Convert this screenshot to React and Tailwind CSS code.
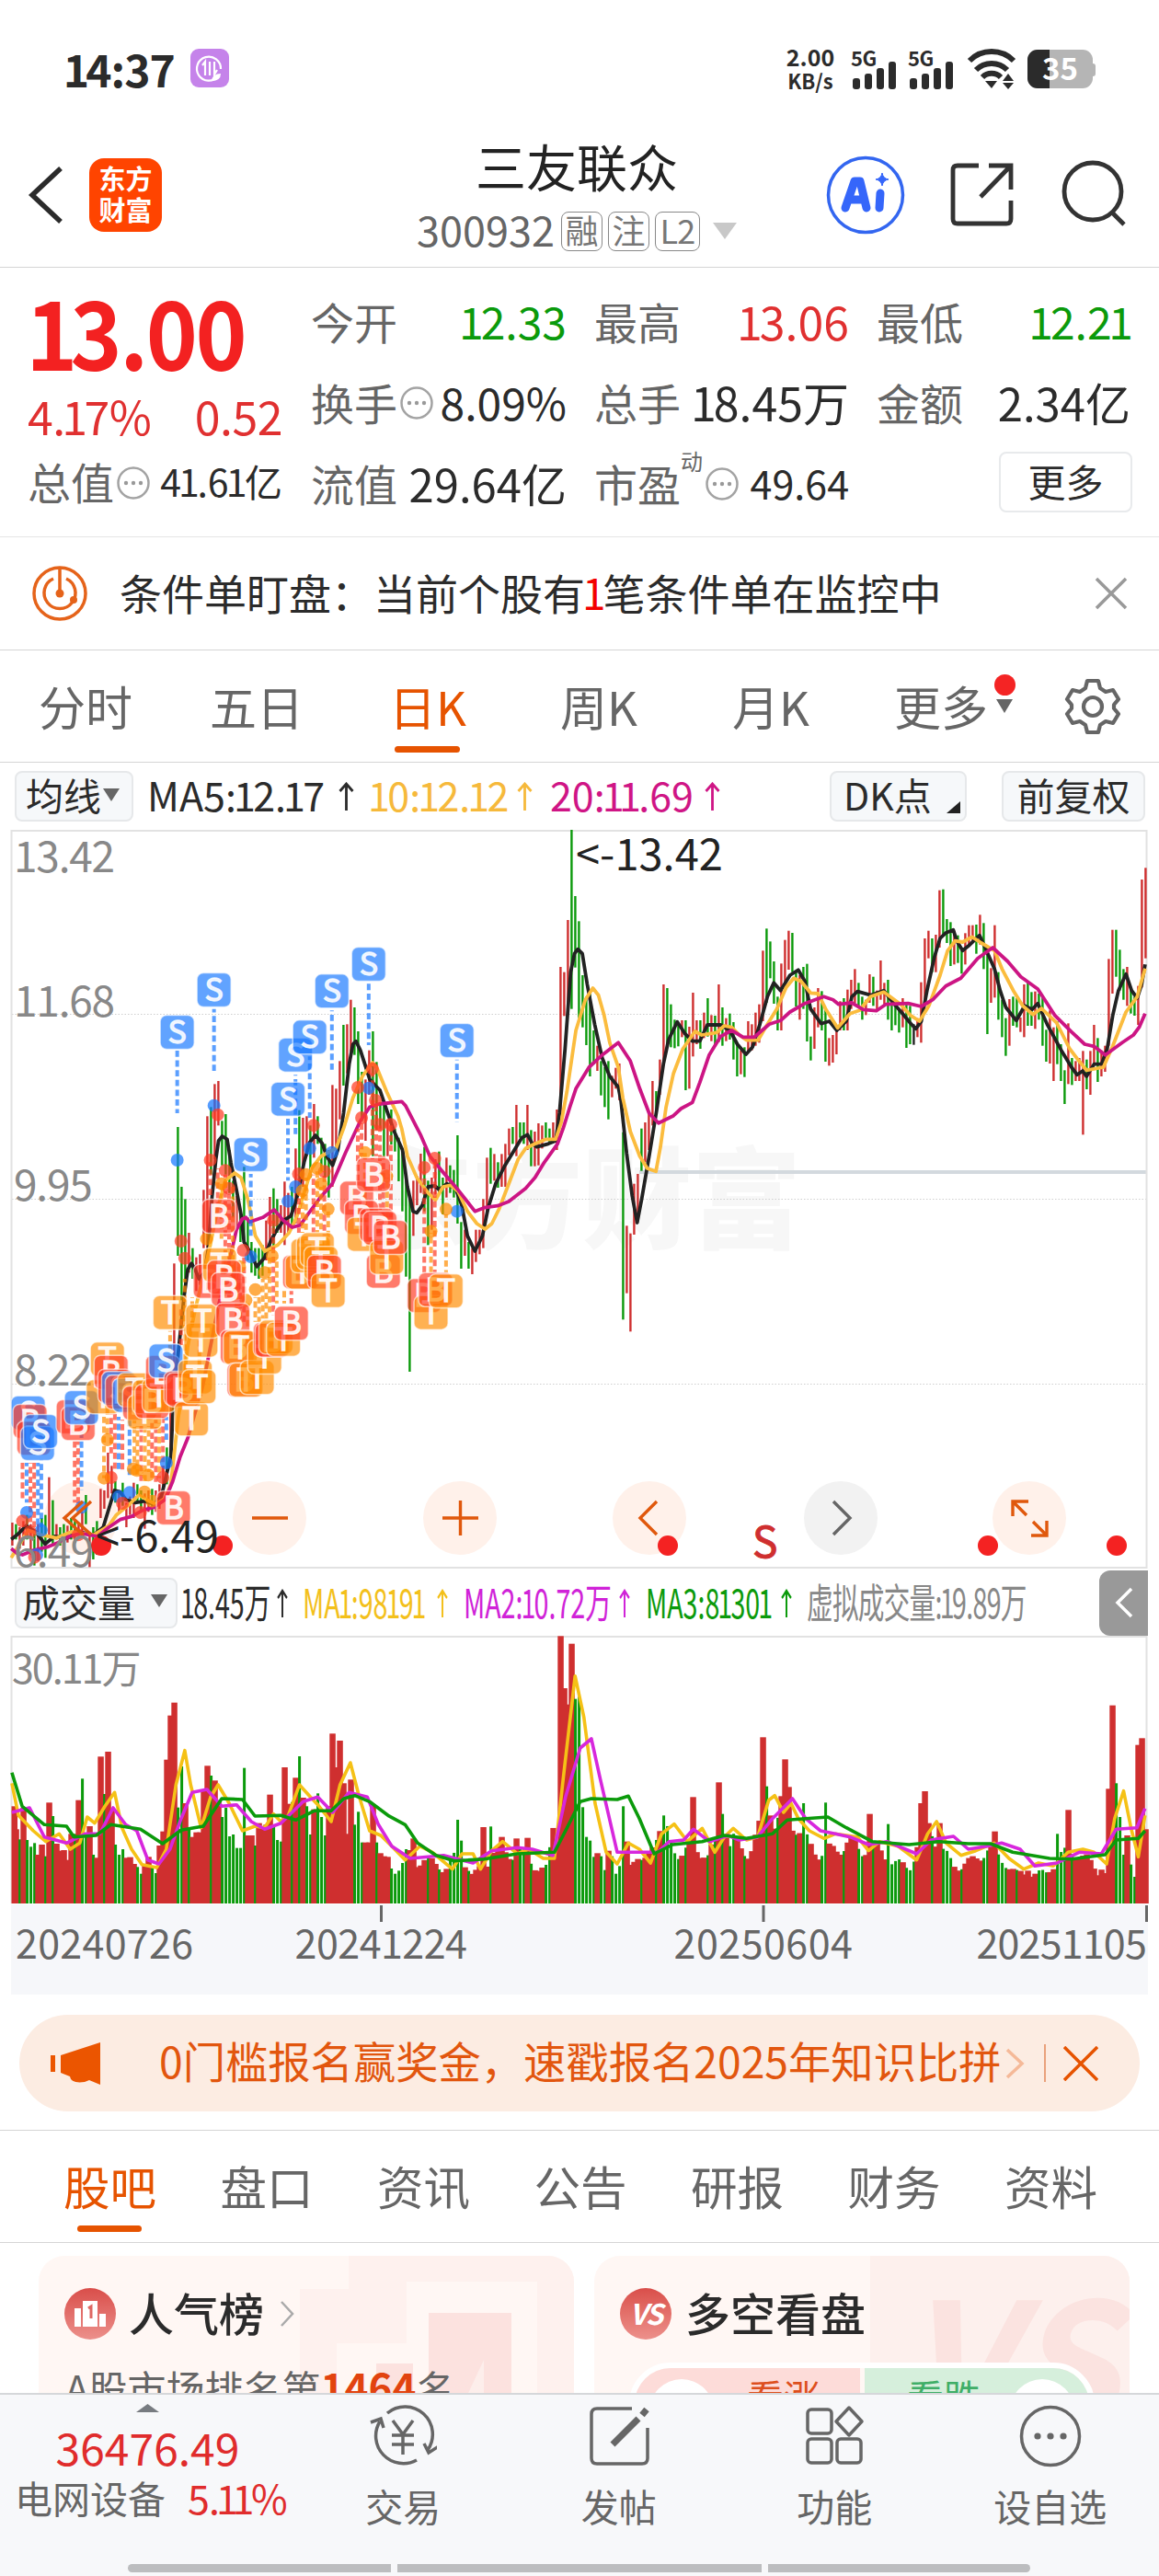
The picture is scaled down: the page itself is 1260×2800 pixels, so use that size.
import React from "react";

const RED = "#cf2f2f";
const GREEN = "#0b9a0b";
const FILL = { S: "#1677ff", B: "#ff3b24", T: "#ff8c00" };

// the chart data is kept on a finer grid than the screen
const px = (u) => u / 2.45;
const py = (v) => 890 + v / 3;
const vx = (u) => u / 1.2444;
const vy = (v) => 1700 + v / 3;

// one candle per day: colour, high, low
const CANDLES = `r2295-2370 g2300-2350 r2310-2380 r2290-2370 g2270-2350 r2300-2400 g2330-2435 r2300-2420 g2280-2390 g2270-2410
r2147-2340 g2222-2370 r2300-2350 g2310-2370 g2300-2430 r2305-2360 g2280-2350 g2290-2360 r2300-2340 r2260-2330
g2205-2300 r2340-2440 g2310-2415 g2290-2400 r2185-2280 r2190-2250 r2067-2215 r2110-2200 g2160-2230 r2190-2260
g2165-2240 r2230-2310 r2210-2270 r2165-2280 g2170-2230 g2190-2260 r2200-2315 r2190-2260 g2185-2270 r2190-2260
r2170-2250 r2110-2200 g2050-2170 r1800-2100 r1450-1800 g1005-1425 g1200-1570 g1240-1530 r1350-1480 g1400-1500
r1430-1540 r1420-1520 r1210-1400 r970-1400 g940-1160 r865-1110 r855-1000 g985-1130 g963-1160 g1080-1220
g1180-1300 r1230-1340 g1280-1380 g1135-1370 g1300-1440 g1380-1480 g1400-1490 g1400-1500 g1390-1490 r1310-1440
r1233-1410 g1205-1400 g1240-1350 r1260-1350 r1183-1390 r1220-1350 g1200-1330 r1075-1320 g950-1200 r975-1200
r970-1100 g1000-1170 r930-1105 g970-1060 g1040-1150 g1060-1170 g1080-1235 r868-1200 r880-1080 r790-980
g672-870 r670-830 r590-760 g615-770 g693-930 g825-985 r850-1050 r755-900 g693-1100 g793-1015
g930-1010 g930-1100 r980-1100 g948-1062 g1010-1085 g1040-1182 g1090-1280 g1180-1493 g1240-1803 r1180-1360
r1165-1260 r1092-1220 g1070-1280 g1180-1390 r1170-1340 r1110-1225 g1085-1220 g1170-1290 r1105-1235 g1130-1220
g1145-1235 g1032-1320 g1315-1467 r1340-1425 g1380-1467 r1400-1485 r1340-1445 r1340-1420 r1240-1400 r1105-1290
g1073-1190 r1093-1180 g1120-1203 r1093-1200 r1060-1200 r1010-1097 g1005-1060 r933-1100 g990-1040 g990-1060
r933-1080 g1015-1133 r1020-1133 r993-1130 r1000-1075 g990-1050 g1010-1060 r990-1050 r948-1080 r483-960
r500-643 r330-605 g36-620 g252-485 g334-650 g510-680 g580-738 g560-840 g690-800 r740-822
g790-902 g810-940 g790-980 r838-908 r812-880 r798-918 g1022-1633 r1327-1547 r1352-1672 r1190-1356
r1158-1300 g1010-1148 r990-1120 r960-1080 r855-1000 g888-960 r785-900 r540-800 g552-740 g605-745
g655-748 g665-742 r657-712 g657-885 r678-880 r567-775 r657-735 g657-750 r632-715 g585-710
r640-725 g642-735 r540-728 g615-740 r650-725 g635-720 g663-785 g735-840 r755-833 g745-842
r660-760 r670-755 r632-740 r605-730 r430-660 g358-600 g400-520 g465-603 g580-690 r472-690
r395-550 r365-492 g372-500 g500-612 r510-655 g483-620 g473-726 g710-788 r615-750 r552-680
g562-690 g620-792 r715-805 r705-795 r680-768 r595-690 g585-690 r557-690 r525-620 r490-600
g535-610 g580-655 r590-640 r507-600 g515-610 r560-625 r462-590 r535-605 g525-655 g590-690
g610-673 g620-697 r585-680 g600-747 g610-735 k670-737 r650-712 r533-730 r390-600 r365-455
g390-500 r378-500 r233-420 g230-380 g327-405 g337-480 r365-475 g380-470 g420-505 r373-475
r347-415 r347-400 g345-440 r313-410 g340-490 g420-702 r487-600 r347-583 g500-655 g590-712
g650-773 r588-740 g580-675 g585-680 r648-695 r540-712 g530-675 g565-675 r563-685 g570-655
g580-740 g688-792 r625-798 r680-855 g660-800 g735-855 g820-930 r667-865 g780-868 r790-855
r780-855 r757-1030 g785-882 r757-900 r672-800 g715-858 r755-840 r740-825 r457-740 r362-570
g362-515 g427-560 g490-590 r483-610 g555-635 g580-642 r545-672 r198-550 r160-455`
    .split(/\s+/)
    .map((s) => {
        const [high, low] = s.slice(1).split("-").map(Number);
        return { color: s[0], high, low };
    });

const MA5 =
    "30,2350 50,2330 70,2305 95,2325 120,2365 145,2340 180,2345 210,2325 250,2335 275,2310 295,2230 305,2190 320,2195 335,2220 360,2230 385,2225 410,2235 430,2210 445,2130 455,2080 460,1950 470,1800 480,1680 490,1560 500,1470 510,1450 520,1470 530,1500 545,1480 555,1400 565,1230 575,1110 582,1050 592,1035 605,1045 615,1120 630,1210 642,1290 650,1380 665,1410 684,1460 705,1430 720,1380 735,1345 755,1310 775,1295 790,1240 810,1120 825,1055 840,1032 858,1058 870,1100 886,1130 900,1080 915,960 930,800 940,735 948,725 960,755 985,850 1000,870 1012,885 1030,950 1050,1020 1072,1080 1085,1200 1100,1280 1110,1285 1125,1260 1140,1200 1158,1197 1170,1210 1190,1190 1205,1200 1215,1210 1230,1260 1245,1360 1265,1410 1285,1360 1300,1270 1320,1190 1345,1130 1370,1080 1390,1040 1405,1030 1418,1060 1430,1070 1460,1060 1480,1050 1490,960 1505,750 1520,500 1530,440 1539,425 1551,440 1564,540 1584,670 1604,780 1624,840 1647,875 1654,920 1669,1090 1684,1230 1697,1317 1709,1240 1729,1100 1749,950 1767,800 1781,720 1804,662 1824,700 1844,725 1864,725 1884,672 1919,672 1944,690 1964,735 1987,768 2004,745 2024,670 2044,580 2061,535 2079,560 2104,510 2126,493 2144,530 2159,620 2187,668 2209,660 2229,690 2254,660 2269,580 2284,563 2319,575 2354,560 2379,600 2404,635 2424,665 2439,685 2454,660 2469,560 2489,450 2504,390 2519,372 2539,362 2549,400 2564,430 2579,415 2609,380 2624,420 2649,490 2664,560 2679,615 2707,658 2729,610 2749,622 2764,602 2789,670 2829,760 2854,810 2869,835 2884,822 2894,840 2914,800 2934,800 2949,750 2964,640 2979,560 2999,506 3014,560 3029,585 3041,540 3050,475";
const MA10 =
    "30,2410 50,2370 75,2320 110,2335 150,2345 190,2325 250,2335 290,2305 310,2270 345,2235 370,2205 390,2220 415,2235 440,2215 455,2170 465,2060 475,1950 485,1880 500,1720 520,1600 540,1500 560,1390 580,1270 600,1180 625,1155 642,1170 660,1240 680,1360 705,1410 740,1390 770,1350 790,1300 810,1220 830,1140 855,1100 895,1075 915,1010 940,910 965,840 992,795 1005,815 1030,890 1060,970 1070,1010 1085,1100 1110,1170 1140,1220 1160,1243 1180,1200 1200,1195 1220,1215 1245,1280 1270,1320 1292,1338 1310,1320 1330,1270 1355,1190 1380,1110 1400,1075 1425,1060 1455,1045 1480,1045 1495,990 1510,890 1534,690 1559,590 1579,552 1594,575 1609,640 1624,730 1647,810 1659,910 1679,1020 1704,1100 1724,1140 1747,1150 1759,1070 1774,940 1794,830 1819,750 1851,693 1869,705 1909,697 1929,675 1949,680 1969,705 1989,722 2019,722 2039,680 2069,620 2094,550 2114,520 2134,530 2159,568 2179,570 2199,620 2231,682 2264,635 2289,625 2319,580 2354,565 2399,605 2424,640 2449,660 2474,610 2504,510 2524,430 2544,398 2564,402 2589,385 2614,405 2649,430 2669,490 2699,560 2724,610 2751,638 2774,618 2814,665 2849,750 2874,790 2894,820 2939,810 2964,740 2999,630 3029,580 3050,488";
const MA20 =
    "30,2380 45,2395 60,2400 90,2385 125,2375 155,2360 185,2340 215,2330 260,2340 290,2310 320,2285 350,2275 380,2255 410,2245 440,2220 460,2160 480,2080 500,2020 540,1850 580,1600 600,1490 615,1420 630,1340 645,1305 655,1300 665,1315 700,1300 730,1275 755,1310 778,1332 800,1325 820,1290 850,1240 885,1190 920,1090 960,985 985,940 1010,930 1070,922 1080,935 1120,1030 1145,1100 1175,1145 1220,1210 1265,1280 1290,1268 1325,1262 1355,1248 1400,1205 1425,1170 1450,1120 1485,1060 1500,1010 1519,935 1534,880 1569,810 1604,770 1647,730 1679,790 1704,880 1729,960 1754,992 1794,968 1814,945 1844,925 1864,860 1889,770 1919,710 1949,690 1979,712 2009,712 2049,670 2079,658 2104,630 2144,602 2194,580 2219,590 2234,605 2269,600 2299,622 2334,626 2359,605 2419,602 2454,612 2484,590 2519,545 2559,520 2604,455 2644,420 2684,465 2719,515 2764,555 2809,640 2854,695 2889,735 2914,742 2944,770 2989,730 3019,705 3034,680 3050,635";

// dashed connectors between a day's dot and its badge
const STEMS = [
    ["S", 472, 756, 960], ["S", 570, 620, 825], ["S", 884, 625, 828], ["S", 982, 538, 738], ["S", 825, 775, 975],
    ["S", 787, 835, 1035], ["S", 767, 978, 1180], ["S", 668, 1158, 1360], ["S", 1217, 785, 990],
    ["B", 60, 2100, 2220], ["S", 71, 2100, 2230], ["B", 81, 2100, 2300], ["B", 91, 2100, 2310], ["S", 101, 2100, 2310], ["S", 110, 2090, 2310],
    ["B", 199, 2030, 2230], ["B", 208, 2030, 2240], ["S", 217, 1985, 2190],
    ["T", 277, 1950, 2150], ["T", 286, 1900, 2010], ["B", 296, 1940, 2080], ["B", 306, 1940, 2120], ["S", 316, 1950, 2120],
    ["B", 326, 1960, 2130], ["S", 345, 1960, 2150], ["T", 358, 1960, 2120], ["T", 366, 1980, 2140], ["B", 376, 1980, 2165],
    ["T", 386, 1990, 2160], ["T", 396, 1980, 2130], ["B", 405, 1970, 2160], ["B", 415, 1960, 2165], ["T", 424, 1970, 2150],
    ["B", 434, 1950, 2140], ["S", 443, 1950, 2030], ["T", 453, 1670, 1850], ["B", 482, 1600, 1720], ["T", 492, 1500, 1800],
    ["T", 512, 1560, 1650], ["T", 531, 1700, 1800], ["B", 560, 1120, 1240], ["B", 580, 1140, 1260], ["T", 590, 1190, 1380],
    ["B", 600, 1160, 1480], ["B", 610, 1210, 1560], ["T", 620, 1200, 1580], ["T", 630, 1460, 1640], ["B", 640, 1500, 1640],
    ["B", 650, 1430, 1640], ["T", 660, 1580, 1740], ["T", 680, 1560, 1640], ["T", 690, 1560, 1640], ["T", 700, 1500, 1630],
    ["T", 709, 1500, 1630], ["T", 718, 1430, 1620], ["B", 728, 1310, 1620], ["T", 737, 1430, 1580], ["T", 757, 1540, 1580],
    ["B", 776, 1540, 1580], ["B", 796, 1160, 1350], ["T", 806, 1220, 1350], ["T", 815, 1170, 1350], ["B", 835, 1160, 1350],
    ["T", 845, 1150, 1350], ["T", 855, 1200, 1350], ["B", 864, 1150, 1410], ["T", 874, 1280, 1440], ["B", 953, 1010, 1180],
    ["B", 963, 980, 1100], ["T", 972, 1090, 1260], ["B", 992, 830, 1110], ["B", 1002, 920, 1100], ["B", 1012, 1000, 1280],
    ["B", 1021, 1100, 1300], ["T", 1031, 1170, 1300], ["B", 1041, 1000, 1300], ["B", 1130, 1150, 1480], ["T", 1148, 1350, 1480],
    ["B", 1158, 1120, 1480], ["T", 1188, 1290, 1480],
];
const DOTS = {
    S: "472,1113 570,935 982,878 884,1088 825,1075 787,1200 767,1247 668,1428 1217,1280 443,2100 345,2197 71,2262 110,2320 98,2400 217,2245 316,2210",
    B: "580,965 560,1113 600,1147 610,1205 835,1000 864,1150 953,876 992,815 1000,918 963,975 1012,997 1041,997 1130,1137 1158,1107 482,1377 492,1433 648,1407 728,1310 795,1158 296,2148 434,2148 326,2232 374,2262 60,2290 80,2325 92,2408 208,2335",
    T: "590,1190 815,1160 845,1140 855,1190 805,1213 874,1273 972,1088 1030,1165 1188,1273 1148,1345 277,2150 286,2025 355,2120 365,2125 385,2195 395,2140 405,2225 550,1370 638,1460 655,1570 680,1535 705,1480 725,1425",
};
const BADGES =
    "S472,696 S570,558 S668,1095 S767,914 S787,770 S825,712 S884,562 S982,474 S1217,723 S75,1937 B80,1965 B90,2020 S100,2037 S108,1998 B195,1950 B208,1972 S217,1920 T275,1885 T286,1762 B296,1805 B306,1850 S316,1858 B326,1870 S345,1880 T358,1862 B372,1905 T385,1935 T398,1885 B405,1900 T424,1880 B433,1805 S442,1768 B462,2247 T453,1610 B482,1857 B488,1862 T510,1957 T520,1820 T530,1852 T535,1700 B560,1508 T585,1455 T540,1638 B583,1296 B597,1495 B608,1535 B620,1635 B632,1722 T640,1725 B650,1830 T655,1830 T685,1822 T705,1755 B720,1698 B725,1700 T735,1690 T755,1697 B776,1645 B798,1478 T805,1478 T820,1425 T835,1415 T845,1405 T855,1450 B864,1478 T874,1538 B950,1237 B963,1300 T970,1355 B995,1160 B1003,1325 B1012,1335 B1021,1475 T1030,1430 B1040,1365 B1130,1555 T1148,1610 B1160,1535 T1188,1540";

const VMA1 =
    "16,715 25,820 45,870 62,905 80,880 95,930 108,910 118,825 128,845 142,790 155,745 165,860 178,930 192,980 212,990 225,930 238,720 250,608 258,720 272,860 285,760 295,720 310,780 328,870 345,855 358,860 370,815 380,840 390,820 405,720 420,760 430,785 448,840 460,720 474,648 485,750 500,870 515,885 530,920 548,965 568,920 585,940 612,995 625,945 640,945 650,995 665,935 680,905 700,945 715,930 735,960 750,960 762,700 778,365 790,500 805,780 820,940 835,978 850,910 865,930 880,975 895,880 912,848 930,905 950,862 967,940 980,890 992,862 1010,900 1025,890 1040,770 1048,755 1060,810 1070,780 1080,830 1095,870 1115,895 1130,880 1160,890 1175,935 1190,905 1215,920 1240,965 1255,880 1267,840 1280,910 1300,950 1320,935 1345,910 1365,960 1385,995 1405,975 1425,985 1445,940 1465,930 1480,940 1497,978 1508,830 1520,740 1530,860 1540,955 1549,820";
const VMA2 =
    "16,810 40,795 60,890 90,910 115,880 135,880 153,795 170,850 185,870 200,965 215,978 230,930 245,830 260,745 280,735 300,790 320,785 340,840 358,865 380,845 410,775 430,760 450,810 472,745 497,760 512,850 530,920 555,960 600,950 640,975 665,935 700,925 720,930 748,950 765,760 785,600 800,570 812,700 835,940 890,940 905,905 925,900 938,865 960,905 985,885 1000,900 1025,890 1045,830 1072,765 1090,830 1110,870 1130,880 1150,890 1175,915 1200,905 1240,945 1260,900 1290,888 1310,930 1335,920 1355,910 1380,930 1400,985 1430,975 1460,940 1490,945 1510,865 1538,860 1549,797";
const VMA3 =
    "16,680 30,790 60,850 90,855 100,890 130,885 150,850 190,865 220,912 245,868 275,855 300,765 328,768 345,822 380,820 400,835 425,805 448,805 465,765 480,755 500,775 525,820 548,850 565,910 590,950 615,968 655,962 700,945 750,940 765,870 785,775 800,765 835,768 850,757 865,830 885,945 910,915 950,905 980,885 1010,895 1045,880 1065,835 1120,825 1145,860 1180,905 1230,915 1270,905 1310,912 1340,912 1370,940 1420,960 1450,962 1495,948 1510,900 1540,895 1549,870";
// days whose volume is known
const VOLUMES =
    "r18,790 r23,865 g28,898 r33,795 g38,900 g43,922 g48,910 r53,948 r58,915 g63,953 r66,778 g71,822 r78,912 r83,935 r88,933 r93,965 r98,880 g103,880 r110,770 g115,700 r121,855 g126,948 r131,958 r136,628 g141,750 r146,612 r151,800 g156,915 g161,948 g166,930 r171,958 r176,956 r181,978 g186,988 g191,1010 r196,980 r201,955 g206,988 g211,1008 r216,918 r221,875 r225,872 r230,638 r235,494 r240,452 g245,660 r250,780 g255,865 r260,890 r265,875 r270,875 r275,740 r280,658 g285,690 r290,706 r295,772 g300,825 g305,795 g310,888 g315,882 g320,926 g325,926 g330,665 r335,885 r340,885 g345,918 r350,845 r355,855 r361,850 r366,752 g371,855 g376,900 g381,905 r385,663 r390,782 r400,697 g405,627 r410,762 g415,790 g420,882 r425,800 g430,748 g435,825 g440,885 g445,932 r449,790 r454,553 r459,663 r464,576 r469,715 r474,703 g479,850 g484,808 g489,908 r494,908 r499,908 r505,785 g510,908 r515,943 r520,953 g525,953 r528,955 g531,993 g536,1010 g541,1000 g546,975 g551,930 r556,933 r559,895 g619,834 g624,902 r658,858 g664,856 r680,890 r699,895 r714,893 r753,868 r758,235 r763,405 r768,458 r773,260 g778,440 g783,433 g788,793 g793,890 g798,902 g803,955 r808,943 g813,953 g818,998 r823,935 g828,953 g833,1010 g838,985 g843,790 r848,905 r898,750 g902,820 r937,760 r972,712 g977,815 g990,920 r1032,565 g1037,725 r1042,820 r1057,757 r1062,637 r1067,727 g1091,780 g1117,778 r1176,815 g1201,848 r1246,780 r1251,741 r1272,845 r1346,872 r1390,1000 g1430,880 r1445,802 r1488,1015 r1495,1008 r1500,733 r1505,461 g1510,715 g1515,825 g1520,948 r1525,885 g1530,980 g1535,1020 r1544,590 r1549,568";

const parse = (s) => s.split(" ").map((p) => p.split(",").map(Number));
const line = (s, fx, fy) =>
    parse(s)
        .map(([x, y]) => `${fx(x).toFixed(1)},${fy(y).toFixed(1)}`)
        .join(" ");

// height of a line at x
const at = (points, x) => {
    const i = points.findIndex((p) => p[0] >= x);
    if (i <= 0) return points[i === 0 ? 0 : points.length - 1][1];
    const [a, b] = [points[i - 1], points[i]];
    return a[1] + ((b[1] - a[1]) * (x - a[0])) / (b[0] - a[0]);
};

const volumes = (() => {
    const ma = parse(VMA1);
    const bars = CANDLES.map((c, i) => {
        const x = 18.5 + i * 4.978;
        const noise = Math.sin(i * 12.9) * 0.5 + Math.sin(i * 5.3) * 0.5;
        const h = (1107 - Math.max(at(ma, x + 8), 760)) * (0.86 + noise * 0.22);
        const color = c.color === "r" || i % 5 === 2 ? "r" : "g";
        return { color, top: 1107 - h };
    });
    VOLUMES.split(" ").forEach((p) => {
        const [x, top] = p.slice(1).split(",").map(Number);
        const i = Math.min(bars.length - 1, Math.round((x - 18.5) / 4.978));
        bars[i] = { color: p[0], top };
    });
    return bars;
})();

// digits, with the "1" set tighter than the others
const Num = ({ children, className = "" }) => (
    <span className={`whitespace-nowrap ${className}`}>
        {String(children)
            .split(/(1)/)
            .map((s, i) =>
                s === "1" ? (
                    <span key={i} className="-ml-[0.07em] -mr-[0.06em]">
                        1
                    </span>
                ) : (
                    s
                )
            )}
    </span>
);

const Info = ({ className = "" }) => (
    <svg className={`shrink-0 ${className}`} width="38" height="38" viewBox="0 0 38 38">
        <circle cx="19" cy="19" r="16.5" fill="none" stroke="#a3a3a3" strokeWidth="2.5" />
        <g fill="#999">
            <circle cx="11" cy="19" r="2.2" />
            <circle cx="19" cy="19" r="2.2" />
            <circle cx="27" cy="19" r="2.2" />
        </g>
    </svg>
);

const Down = ({ w = 16, h = 14, color = "#666", className = "" }) => (
    <svg className={`shrink-0 ${className}`} width={w} height={h} viewBox="0 0 10 10" preserveAspectRatio="none">
        <path d="M0 0h10L5 10z" fill={color} />
    </svg>
);

const Signal = () => (
    <div className="flex h-[44px] w-[50px] flex-col justify-between">
        <span className="-mt-[6px] h-[30px] text-[22px] font-bold leading-[30px] tracking-tight">5G</span>
        <svg className="-mt-4" width="50" height="30" viewBox="0 0 50 30">
            <g fill="#2b2b2b">
                <rect x="2" y="18" width="8" height="12" rx="3" />
                <rect x="15" y="13" width="8" height="17" rx="3" />
                <rect x="28" y="7" width="8" height="23" rx="3" />
                <rect x="41" y="0" width="8" height="30" rx="3" />
            </g>
        </svg>
    </div>
);

function StatusBar() {
    return (
        <div className="flex h-[140px] items-start pt-[52px] pl-[72px] text-[#2b2b2b]">
            <Num className="w-[135px] text-[48px] font-bold leading-[44px] tracking-[-0.02em]">14:37</Num>
            <svg width="42" height="44" viewBox="0 0 42 44">
                <rect y="1" width="42" height="42" rx="9" fill="#c583ea" />
                <g fill="none" stroke="#fff" strokeWidth="2.2">
                    <path d="M30 31a13 13 0 1 1 3-8" />
                    <path d="M16 30V15l-3 4M21 15v15M26 15v14l3-5" />
                </g>
                <path d="M23 36q1-8 10-8q0 8-10 8" fill="#fff" />
            </svg>
            <div className="ml-[604px] flex w-[56px] flex-col items-center text-[25px] font-bold leading-[26px]">
                <span className="-mt-1">2.00</span>
                <span className="text-[22px]">KB/s</span>
            </div>
            <div className="ml-4 flex gap-[12px] pt-[1px]">
                <Signal />
                <Signal />
            </div>
            <svg className="ml-[14px] mt-[1px]" width="54" height="44" viewBox="0 0 54 44">
                <g fill="none" stroke="#2b2b2b" strokeWidth="6">
                    <path d="M3 13a34 34 0 0 1 48 0" />
                    <path d="M10 23a24 24 0 0 1 34 0" />
                    <path d="M17 31a14 14 0 0 1 20 0" />
                </g>
                <path d="M20 35h13l-6 8zM39 35l6-8 6 8zM39 37h12l-6 7z" fill="#2b2b2b" />
            </svg>
            <div className="relative ml-[12px] mt-[2px] flex h-[42px] w-[71px] items-center justify-center overflow-hidden rounded-[11px] bg-[#b5b5b5]">
                <div className="absolute inset-y-0 left-0 w-[24px] bg-[#2b2b2b]" />
                <span className="relative -mt-1 text-[33px] font-bold leading-none text-white">35</span>
            </div>
            <div className="mt-[17px] h-[14px] w-[3px] rounded-r bg-[#b5b5b5]" />
        </div>
    );
}

const Tag = ({ children, className = "w-[45px]" }) => (
    <span
        className={`flex h-[43px] items-center justify-center rounded-[8px] border border-[#888] pb-[5px] text-[36px] leading-none text-[#777] ${className}`}
    >
        {children}
    </span>
);

function Header() {
    return (
        <div className="flex h-[151px] items-start border-b border-[#d5d5d5]">
            <svg className="ml-[30px] mt-[40px]" width="40" height="64" viewBox="0 0 40 64">
                <path d="M36 3L5 32l31 29" fill="none" stroke="#2b2b2b" strokeWidth="5.5" />
            </svg>
            <div className="ml-[27px] mt-[32px] flex h-[80px] w-[79px] flex-col items-center justify-center rounded-[16px] bg-[#ff4400] pb-1 text-[29px] font-bold leading-[34px] text-white">
                <span>东方</span>
                <span>财富</span>
            </div>
            <div className="ml-[271px] flex w-[360px] flex-col items-center">
                <span className="mt-[12px] h-[60px] text-[55px] leading-[54px] text-[#222]">三友联众</span>
                <div className="mt-[17px] flex h-[44px] items-center gap-[6px]">
                    <span className="mr-[1px] pb-[5px] text-[45px] leading-none text-[#666]">300932</span>
                    <Tag>融</Tag>
                    <Tag>注</Tag>
                    <Tag className="w-[49px] tracking-tight">L2</Tag>
                    <Down className="ml-[8px]" w={26} h={18} color="#c8c8c8" />
                </div>
            </div>
            <svg className="ml-[91px] mt-[28px]" width="86" height="88" viewBox="0 0 86 88">
                <circle cx="43" cy="44" r="40.5" fill="none" stroke="#3366f0" strokeWidth="3.5" />
                <path
                    d="M21 58L31 29h6l7 29M25 49h16"
                    fill="none"
                    stroke="#3566fa"
                    strokeWidth="9"
                    strokeLinejoin="round"
                    strokeLinecap="round"
                />
                <path d="M59 42L58 58" stroke="#3566fa" strokeWidth="9" strokeLinecap="round" />
                <path d="M61 20q1 6 7 7q-6 1-7 7q-1-6-7-7q6-1 7-7" fill="#3566fa" stroke="#3566fa" />
            </svg>
            <svg className="ml-[49px] mt-[36px]" width="70" height="70" viewBox="0 0 70 70">
                <g fill="none" stroke="#333" strokeWidth="4.8">
                    <path d="M31 4H8q-5 0-5 5v53q0 5 5 5h53q5 0 5-5V42" />
                    <path d="M42 4h24v26M65 5L33 38" />
                </g>
            </svg>
            <svg className="ml-[50px] mt-[34px]" width="74" height="74" viewBox="0 0 74 74">
                <g fill="none" stroke="#333" strokeWidth="4.8">
                    <circle cx="35" cy="34" r="31" />
                    <path d="M56 57l13 13" />
                </g>
            </svg>
        </div>
    );
}

const Cell = ({ label, info, sup, value, color = "text-[#2b2b2b]", size = "text-[48px]", className = "" }) => (
    <div className={`flex h-[88px] items-center ${className}`}>
        <span className="text-[47px] leading-none text-[#666]">{label}</span>
        {sup && <span className="mb-[46px] text-[24px] leading-none text-[#666]">{sup}</span>}
        {info && <Info className="mt-1 ml-[2px]" />}
        <Num className={`ml-auto leading-none ${size} ${color}`}>{value}</Num>
    </div>
);

function Quote() {
    return (
        <div className="flex h-[293px] items-start border-b border-[#e5e5e5] pt-[10px]">
            <div className="ml-[30px] w-[277px] shrink-0">
                <div className="h-[124px] pt-[8px]">
                    <Num className="ml-[5px] inline-block origin-left scale-x-[0.915] text-[104px] font-bold leading-[98px] tracking-[-0.025em] text-[#f32121]">
                        13.00
                    </Num>
                </div>
                <div className="flex h-[52px] items-center justify-between text-[50px] leading-none tracking-[-0.01em] text-[#e03030]">
                    <Num>4.17%</Num>
                    <Num>0.52</Num>
                </div>
                <Cell label="总值" info value="41.61亿" size="text-[41px]" className="pt-[3px]" />
            </div>
            <div className="ml-[31px] grid grid-cols-[278px_277px_276px] gap-x-[30px] pt-[3px]">
                <Cell label="今开" value="12.33" color="text-[#0b9a0b]" />
                <Cell label="最高" value="13.06" color="text-[#e03030]" size="text-[50px]" />
                <Cell label="最低" value="12.21" color="text-[#0b9a0b]" />
                <Cell label="换手" info value="8.09%" size="text-[48px]" />
                <Cell label="总手" value="18.45万" size="text-[50px]" />
                <Cell label="金额" value="2.34亿" size="text-[49px]" />
                <Cell label="流值" value="29.64亿" size="text-[49px]" />
                <Cell label="市盈" sup="动" info value="49.64" size="text-[43px]" />
                <div className="flex h-[88px] items-center justify-end">
                    <span className="-mr-[2px] flex h-[66px] w-[145px] items-center justify-center rounded-[8px] border-2 border-[#e8eaec] pb-[4px] text-[41px] leading-none text-[#2b2b2b]">
                        更多
                    </span>
                </div>
            </div>
        </div>
    );
}

function Alert() {
    return (
        <div className="flex h-[123px] items-center border-b border-[#d5d5d5] pl-[34px]">
            <svg width="62" height="62" viewBox="0 0 62 62">
                <g fill="none" stroke="#e5631a" strokeWidth="3.5">
                    <circle cx="31" cy="31" r="28" />
                    <path d="M24 15a17 17 0 1 0 14 0M31 3v28" />
                </g>
                <circle cx="31" cy="31" r="4.5" fill="#e5631a" />
                <circle cx="46" cy="38" r="4" fill="#e5631a" />
            </svg>
            <span className="ml-[34px] pb-[5px] text-[46px] leading-none text-[#2b2b2b]">
                条件单盯盘：当前个股有<span className="-mx-[3px] text-[#f30000]">1</span>笔条件单在监控中
            </span>
            <svg className="ml-auto mr-[34px]" width="36" height="36" viewBox="0 0 36 36">
                <path d="M2 2l32 32M34 2L2 34" stroke="#999" strokeWidth="3.5" />
            </svg>
        </div>
    );
}

function PeriodTabs() {
    const tabs = [
        ["分时", "w-[186px]"],
        ["五日", "w-[195px]"],
        ["日K", "w-[186px]"],
        ["周K", "w-[187px]"],
        ["月K", "w-[176px]"],
    ];
    return (
        <div className="flex h-[122px] items-center border-b border-[#d5d5d5] pl-[42px] text-[51px] leading-none text-[#666]">
            {tabs.map(([t, w]) => (
                <div key={t} className={`relative shrink-0 pb-[1px] ${w} ${t === "日K" ? "text-[#e65300]" : ""}`}>
                    {t}
                    {t === "日K" && <div className="absolute -bottom-[24px] left-[6px] h-[7px] w-[71px] rounded-full bg-[#e65300]" />}
                </div>
            ))}
            <div className="relative flex items-center pb-[1px]">
                更多
                <Down className="ml-[9px]" w={18} h={15} />
                <div className="absolute -top-[9px] right-[-3px] h-[23px] w-[23px] rounded-full bg-[#f42424]" />
            </div>
            <svg className="ml-[56px]" width="62" height="62" viewBox="0 0 62 62">
                <g fill="none" stroke="#666" strokeWidth="4.2" strokeLinejoin="round">
                    <path d="M25 3h12l2 8 6 4 8-2 6 10-5 6v4l5 6-6 10-8-2-6 4-2 8H25l-2-8-6-4-8 2-6-10 5-6v-4l-5-6 6-10 8 2 6-4z" />
                    <circle cx="31" cy="31" r="10" />
                </g>
            </svg>
        </div>
    );
}

const PILL = "flex h-[55px] items-center rounded-[8px] border-2 border-[#e6e8ea] bg-[#f6f8fa] pb-[4px] text-[41px] text-[#2b2b2b]";

function AverageBar() {
    return (
        <div className="flex h-[73px] items-center pl-[16px] text-[43px] leading-none">
            <div className={`${PILL} w-[129px] pl-[10px]`}>
                均线
                <Down className="ml-[2px]" w={18} />
            </div>
            <div className="ml-[15px] flex items-center pb-[4px]">
                <Num className="w-[208px] text-[#2b2b2b]">MA5:12.17</Num>
                <Arrow color="#2b2b2b" />
                <Num className="ml-[18px] w-[159px] text-[#f6b93b]">10:12.12</Num>
                <Arrow color="#f6b93b" />
                <Num className="ml-[19px] w-[168px] text-[#cf1585]">20:11.69</Num>
                <Arrow color="#cf1585" />
            </div>
            <div className={`${PILL} relative ml-auto w-[149px] pl-[13px]`}>
                DK点
                <svg className="absolute bottom-[7px] right-[5px]" width="15" height="13" viewBox="0 0 15 13">
                    <path d="M15 0v13H0z" fill="#222" />
                </svg>
            </div>
            <div className={`${PILL} ml-[38px] mr-[15px] w-[156px] justify-center`}>前复权</div>
        </div>
    );
}

const Arrow = ({ color, w = 17 }) => (
    <svg className="mt-[4px] shrink-0" width={w} height="31" viewBox="0 0 17 31" preserveAspectRatio="none">
        <path d="M8.5 31V2M1.5 10l7-8 7 8" fill="none" stroke={color} strokeWidth="2.8" />
    </svg>
);

const Badge = ({ kind, x, y }) => (
    <g>
        <rect
            x={x - 18.5}
            y={y - 18.5}
            width="37"
            height="37"
            rx="7"
            fill={FILL[kind]}
            fillOpacity="0.68"
            stroke="#fff"
            strokeOpacity="0.6"
            strokeWidth="1.5"
        />
        <text x={x} y={y + 12} textAnchor="middle" fontSize="34" fill="#fff" fillOpacity="0.9" stroke="#fff" strokeOpacity="0.8" strokeWidth="1.4">
            {kind}
        </text>
    </g>
);

function PriceChart() {
    return (
        <svg className="block" width="1260" height="804" viewBox="0 902 1260 804">
            <text x="871" y="1348" textAnchor="end" fontSize="119" fontWeight="900" fill="#f7f7f7">
                东方财富
            </text>
            {[1102.5, 1303.5, 1504.5].map((y) => (
                <path key={y} d={`M13 ${y}H1246`} stroke="#cfcfcf" strokeDasharray="1.5 2" />
            ))}
            <path d="M695 1274H1246" stroke="#d3d9de" strokeWidth="4" />
            <rect x="12.5" y="903" width="1234" height="801" fill="none" stroke="#e2e2e2" strokeWidth="2" />

            <g fontSize="46" fill="#888" letterSpacing="-1.2">
                <text x="15" y="948">13.42</text>
                <text x="15" y="1105">11.68</text>
                <text x="15" y="1305">9.95</text>
                <text x="15" y="1506">8.22</text>
            </g>
            {[88, 293, 500, 706, 1119].map((x) => (
                <circle key={x} cx={x} cy="1650" r="40" fill="#fff1ea" />
            ))}
            <circle cx="914" cy="1650" r="40" fill="#f2f2f2" />

            {CANDLES.map((c, i) => (
                <path
                    key={i}
                    d={`M${13.4 + i * 4} ${py(c.high)}V${py(c.low)}`}
                    stroke={c.color === "r" ? RED : c.color === "g" ? GREEN : "#222"}
                    strokeWidth="2.4"
                />
            ))}
            <g fill="none" strokeWidth="3.8" strokeLinejoin="round">
                <polyline points={line(MA5, px, py)} stroke="#222" />
                <polyline points={line(MA10, px, py)} stroke="#fbbc3e" />
                <polyline points={line(MA20, px, py)} stroke="#cc1584" />
            </g>

            <g fill="none" strokeWidth="4" strokeDasharray="6.8 3.8" opacity="0.7">
                {STEMS.map(([k, u, a, b], i) => (
                    <path key={i} d={`M${px(u)} ${py(a)}V${py(b)}`} stroke={FILL[k]} strokeDashoffset={(i % 3) * 3} />
                ))}
            </g>
            {Object.entries(DOTS).map(([k, s]) =>
                parse(s).map(([u, v], i) => <circle key={k + i} cx={px(u)} cy={py(v)} r="7" fill={FILL[k]} fillOpacity="0.72" />)
            )}
            {BADGES.split(" ").map((b, i) => {
                const [u, v] = b.slice(1).split(",").map(Number);
                return <Badge key={i} kind={b[0]} x={px(u)} y={py(v)} />;
            })}

            <g fill="none" stroke="#e0580c" strokeWidth="3.4">
                <path d="M90 1632l-20 18 20 18M99 1632l-20 18 20 18" />
                <path d="M274 1650h39M481 1650h39M500.500 1631v38" />
                <path d="M714 1632l-18 18 18 18" />
                <path d="M906 1632l18 18-18 18" stroke="#666" />
                <path d="M1101 1648v-16h17M1102 1633l14 14M1138 1653v16h-17M1137 1668l-14-14" />
            </g>
            {[110, 242, 726, 1074, 1214].map((x) => (
                <circle key={x} cx={x} cy="1680" r="11" fill="#f42222" />
            ))}
            <text x="15" y="1703" fontSize="46" fill="#888" letterSpacing="-0.8">
                6.49
            </text>
            <g fontSize="47" fill="#222">
                <text x="626" y="946">&lt;-13.42</text>
                <text x="104" y="1687">&lt;-6.49</text>
            </g>
            <text x="818" y="1693" fontSize="46" fill={RED} stroke={RED}>
                S
            </text>
        </svg>
    );
}

const Slim = ({ children, w, className = "" }) => (
    <div className={`shrink-0 ${w}`}>
        <Num className={`inline-block origin-left scale-x-[0.65] ${className}`}>{children}</Num>
    </div>
);

function VolumeBar() {
    return (
        <div className="flex h-[72px] items-center pl-[16px] text-[44px] leading-none">
            <div className={`${PILL} w-[177px] shrink-0 pl-[6px]`}>
                成交量
                <Down className="ml-[17px]" w={18} />
            </div>
            <div className="flex items-center pb-[4px]">
                <Slim w="w-[108px] pl-[5px]" className="text-[#2b2b2b]">18.45万</Slim>
                <Arrow w={12} color="#2b2b2b" />
                <Slim w="w-[162px] pl-[16px]" className="text-[#f3c01b]">MA1:98191</Slim>
                <Arrow w={12} color="#f3c01b" />
                <Slim w="w-[186px] pl-[17px]" className="text-[#d023d8]">MA2:10.72万</Slim>
                <Arrow w={12} color="#d023d8" />
                <Slim w="w-[164px] pl-[17px]" className="text-[#0b9a0b]">MA3:81301</Slim>
                <Arrow w={12} color="#0b9a0b" />
                <Slim w="w-[260px] pl-[16px]" className="tracking-[-0.025em] text-[#888]">虚拟成交量:19.89万</Slim>
            </div>
            <div className="ml-auto mr-[12px] flex h-[71px] w-[53px] shrink-0 items-center justify-center rounded-l-[12px] bg-[#999]">
                <svg width="22" height="34" viewBox="0 0 22 34">
                    <path d="M19 2L4 17l15 15" fill="none" stroke="#fff" strokeWidth="3.5" />
                </svg>
            </div>
        </div>
    );
}

function VolumeChart() {
    return (
        <svg className="block" width="1260" height="390" viewBox="0 1778 1260 390">
            <path d="M12 1779H1247M12.500 1778V2069M1246.500 1778V2069" stroke="#e2e2e2" strokeWidth="2" />
            <rect x="12" y="2070" width="1236" height="98" fill="#f6f7fa" />
            <text x="13" y="1830" fontSize="43" fill="#888" letterSpacing="-2">
                30.11万
            </text>
            {volumes.map((b, i) =>
                b.color === "r" ? (
                    <rect key={i} x={i === 0 ? 12.5 : 10.3 + i * 4} y={vy(b.top)} width="6.5" height={2069 - vy(b.top)} fill={RED} />
                ) : (
                    <rect key={i} x={12.1 + i * 4} y={vy(b.top)} width="3" height={2069 - vy(b.top)} fill={GREEN} />
                )
            )}
            <g fill="none" strokeWidth="3.6" strokeLinejoin="round">
                <polyline points={line(VMA1, vx, vy)} stroke="#f5c116" />
                <polyline points={line(VMA2, vx, vy)} stroke="#d727dd" />
                <polyline points={line(VMA3, vx, vy)} stroke="#0b9a0b" />
            </g>
            <path d="M414.500 2071v18M830 2071v18M1246.500 2071v18" stroke="#666" strokeWidth="3" />
            <g fontSize="43" fill="#666">
                <text x="17" y="2129" letterSpacing="0.3">20240726</text>
                <text x="414" y="2129" textAnchor="middle" letterSpacing="-0.5">20241224</text>
                <text x="830" y="2129" textAnchor="middle" letterSpacing="0.5">20250604</text>
                <text x="1246" y="2129" textAnchor="end" letterSpacing="-0.8">20251105</text>
            </g>
        </svg>
    );
}

function Banner() {
    return (
        <div className="h-[148px] border-b border-[#d5d5d5] px-[21px] pt-[22px]">
            <div className="flex h-[105px] items-center rounded-full bg-[#fcece2] pl-[34px]">
                <svg width="56" height="48" viewBox="0 0 56 48">
                    <path d="M0 15h5v18H0zM11 15L54 1v46l-12-5-5 2q-15 2-16-6l-10-4z" fill="#eb5500" />
                </svg>
                <span className="ml-[62px] whitespace-nowrap pb-[6px] text-[46.3px] leading-none text-[#e2560e]">
                    0门槛报名赢奖金，速戳报名2025年知识比拼
                </span>
                <svg className="ml-[4px]" width="22" height="36" viewBox="0 0 22 36">
                    <path d="M2 3l16 15L2 33" fill="none" stroke="#f5b998" strokeWidth="3.5" />
                </svg>
                <div className="ml-[20px] h-[41px] w-[2px] bg-[#e9a17c]" />
                <svg className="ml-[19px]" width="38" height="38" viewBox="0 0 38 38">
                    <path d="M1 1l36 36M37 1L1 37" stroke="#e65300" strokeWidth="3.5" />
                </svg>
            </div>
        </div>
    );
}

function ContentTabs() {
    return (
        <div className="flex h-[122px] items-center border-b border-[#d5d5d5] pl-[69px] text-[50.5px] leading-none text-[#666]">
            {["股吧", "盘口", "资讯", "公告", "研报", "财务", "资料"].map((t, i) => (
                <div key={t} className={`relative w-[170.5px] shrink-0 pb-[3px] ${i === 0 ? "text-[#e65300]" : ""}`}>
                    {t}
                    {i === 0 && <div className="absolute -bottom-[23px] left-[15px] h-[7px] w-[70px] rounded-full bg-[#e65300]" />}
                </div>
            ))}
        </div>
    );
}

function Cards() {
    return (
        <div className="flex h-[163px] gap-[22px] overflow-hidden pl-[42px] pt-[14px]">
            <div className="relative h-[240px] w-[582px] shrink-0 overflow-hidden rounded-[28px] bg-[#fff7f4]">
                <svg className="absolute right-0 top-0" width="300" height="160" viewBox="0 0 300 160">
                    <path d="M55 0H300V160H260V28H118V95H42V160H2V36H55z" fill="#fef1ee" />
                    <path d="M142 62h90v98h-90zM85 117h40v43H85z" fill="#fce2df" />
                    <path d="M180 160l22-47v47z" fill="#fdeeeb" />
                </svg>
                <div className="relative flex items-center pl-[28px] pt-[35px]">
                    <svg width="56" height="56" viewBox="0 0 56 56">
                        <defs>
                            <linearGradient id="rank" x1="0" y1="0" x2="0" y2="1">
                                <stop offset="0" stopColor="#d94e4a" />
                                <stop offset="1" stopColor="#ec908b" />
                            </linearGradient>
                        </defs>
                        <circle cx="28" cy="28" r="28" fill="url(#rank)" />
                        <path d="M11 22h7v20h-7zM20 14h16v28H20zM38 28h7v14h-7z" fill="#fff" />
                        <path d="M26 22l3-2v13" stroke="#de6863" strokeWidth="3" fill="none" />
                    </svg>
                    <span className="ml-[14px] pb-[5px] text-[49px] font-medium leading-none text-[#2b2b2b]">人气榜</span>
                    <svg className="ml-[16px]" width="18" height="28" viewBox="0 0 18 28">
                        <path d="M3 1l12 13L3 27" fill="none" stroke="#aaa" strokeWidth="2.5" />
                    </svg>
                </div>
                <div className="relative mt-[29px] whitespace-nowrap pl-[29px] text-[42px] leading-none text-[#666]">
                    A股市场排名第<span className="text-[44px] font-bold text-[#e2430f]">1464</span>名
                </div>
            </div>
            <div className="relative h-[240px] w-[582px] shrink-0 overflow-hidden rounded-[28px] bg-[#fff7f4]">
                <div className="absolute right-0 top-0 h-full w-[282px] bg-[#fdf0ed]" />
                <span className="absolute right-[14px] top-[12px] text-[190px] font-bold italic leading-none text-[#fbe3e0]">VS</span>
                <div className="relative flex items-center pl-[28px] pt-[35px]">
                    <div className="flex h-[56px] w-[56px] items-center justify-center rounded-full bg-linear-to-b from-[#d94e4a] to-[#ec908b] pb-1 text-[31px] font-bold italic leading-none tracking-tighter text-white">
                        VS
                    </div>
                    <span className="ml-[15px] pb-[5px] text-[49px] font-medium leading-none text-[#2b2b2b]">多空看盘</span>
                </div>
                <div className="relative mx-auto mt-[25px] flex h-[90px] w-[506px] overflow-hidden rounded-full border-[6px] border-white text-[40px] leading-none">
                    <div className="w-[245px] shrink-0 bg-[#fddcd9] pl-[122px] pt-[10px] text-[#dd4f1d]">看涨</div>
                    <div className="ml-[5px] flex-1 bg-[#d6efdc] pl-[46px] pt-[10px] text-[#3fae67]">看跌</div>
                    <div className="absolute left-[16px] top-[12px] h-[70px] w-[70px] rounded-full bg-white" />
                    <div className="absolute right-[16px] top-[12px] h-[70px] w-[70px] rounded-full bg-white" />
                </div>
            </div>
        </div>
    );
}

const NAV = [
    [
        "交易",
        <g key="t">
            <path d="M20 10A30 30 0 0 1 64 50M52 61A30 30 0 0 1 12 19M2 20l11-4 3 10M76 46l-11 7-5-10" />
            <path d="M26 18l11 15 11-15M25 34h24M25 44h24M37 33v22" />
        </g>,
    ],
    [
        "发帖",
        <g key="p">
            <path d="M51 5H13q-6 0-6 6v48q0 6 6 6h49q6 0 6-6V26" />
            <path d="M30 44L58 16" strokeWidth="7" />
            <path d="M62 12l5-6" strokeWidth="7" />
        </g>,
    ],
    [
        "功能",
        <g key="f">
            <rect x="8" y="6" width="26" height="26" rx="4" />
            <rect x="8" y="38" width="26" height="26" rx="4" />
            <rect x="40" y="38" width="26" height="26" rx="4" />
            <path d="M53 4l14 15-14 15-14-15z" strokeLinejoin="round" />
        </g>,
    ],
    [
        "设自选",
        <g key="s">
            <circle cx="37" cy="35" r="31.5" />
            <g fill="#666" stroke="none">
                <circle cx="23" cy="35" r="3.6" />
                <circle cx="37" cy="35" r="3.6" />
                <circle cx="51" cy="35" r="3.6" />
            </g>
        </g>,
    ],
];

function BottomNav() {
    return (
        <div className="h-[199px] border-t-2 border-[#d5d7da] bg-[#f7f8fa]">
            <div className="flex h-[184px] items-start">
                <div className="flex w-[321px] shrink-0 flex-col items-center">
                    <Down className="mt-[10px] rotate-180" w={25} h={9} color="#777b80" />
                    <Num className="mt-[15px] text-[48px] leading-[44px] text-[#e02c2c]">36476.49</Num>
                    <div className="mt-[9px] flex w-[305px] items-center whitespace-nowrap pl-[8px] text-[41px] leading-[48px] text-[#666]">
                        电网设备
                        <Num className="ml-[24px] text-[43px] tracking-[-0.02em] text-[#e02c2c]">5.11%</Num>
                    </div>
                </div>
                {NAV.map(([t, icon]) => (
                    <div key={t} className="flex w-[234.5px] shrink-0 flex-col items-center text-[41px] leading-none text-[#666]">
                        <svg className="mt-[10px]" width="74" height="70" viewBox="0 0 74 70" fill="none" stroke="#666" strokeWidth="3.5">
                            {icon}
                        </svg>
                        <span className="mt-[20px]">{t}</span>
                    </div>
                ))}
            </div>
            <div className="ml-[139px] flex gap-[7px]">
                <div className="h-[9px] w-[286px] rounded-l-full bg-[#bcbdbf]" />
                <div className="h-[9px] w-[396px] bg-[#bcbdbf]" />
                <div className="h-[9px] w-[285px] rounded-r-full bg-[#bcbdbf]" />
            </div>
        </div>
    );
}

export default function App() {
    return (
        <div className="h-[2800px] w-[1260px] overflow-hidden bg-white font-['Noto_Sans_CJK_SC',sans-serif]">
            <StatusBar />
            <Header />
            <Quote />
            <Alert />
            <PeriodTabs />
            <AverageBar />
            <PriceChart />
            <VolumeBar />
            <VolumeChart />
            <Banner />
            <ContentTabs />
            <Cards />
            <BottomNav />
        </div>
    );
}
